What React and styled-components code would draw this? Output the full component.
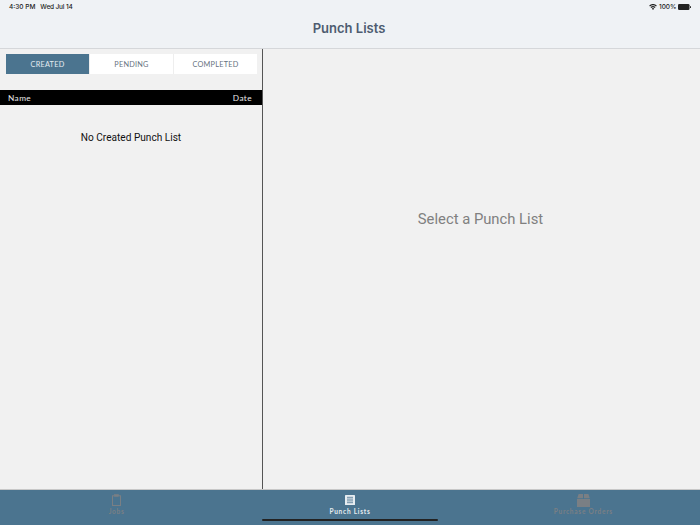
import styled, { createGlobalStyle } from "styled-components";

const GlobalStyle = createGlobalStyle`
  html, body, #root {
    margin: 0;
    padding: 0;
    height: 100%;
  }

  body {
    background: #f1f1f1;
    font-family: "Roboto", "Liberation Sans", sans-serif;
    overflow: hidden;
  }

  * {
    box-sizing: border-box;
  }
`;

const Styled = {
  Page: styled.div`
    display: flex;
    flex-direction: column;
    width: 700px;
    height: 525px;
    position: relative;
  `,

  Header: styled.header`
    flex: 0 0 49px;
    display: flex;
    flex-direction: column;
    background: #eff2f5;
    border-bottom: 1px solid #d5d7da;
  `,

  StatusBar: styled.div`
    display: flex;
    align-items: center;
    justify-content: space-between;
    height: 13px;
    padding: 0 9px;
    font-family: "Inter", "Liberation Sans", sans-serif;
    font-size: 6.5px;
    font-weight: 500;
    color: #222;
  `,

  StatusGroup: styled.div`
    display: flex;
    align-items: center;
    gap: ${({ gap }) => gap}px;
  `,

  DateText: styled.span`
    letter-spacing: -0.15px;
  `,

  Title: styled.h1`
    margin: 0;
    padding-top: 7px;
    padding-right: 2px;
    text-align: center;
    font-family: "Inter", "Liberation Sans", sans-serif;
    font-size: 13px;
    font-weight: 600;
    line-height: 16px;
    color: #4d5c70;
  `,

  Main: styled.main`
    flex: 1;
    display: flex;
    min-height: 0;
  `,

  Sidebar: styled.section`
    flex: 0 0 263px;
    display: flex;
    flex-direction: column;
    border-right: 1px solid #555;
  `,

  Tabs: styled.div`
    display: flex;
    margin: 5px 5px 0 6px;
    height: 20px;
  `,

  Tab: styled.div`
    flex: 1;
    display: flex;
    align-items: center;
    justify-content: center;
    font-family: "Lato", "Liberation Sans", sans-serif;
    font-size: 7.3px;
    letter-spacing: 0.25px;
    color: ${({ active }) => (active ? "#e4ebf0" : "#667280")};
    background: ${({ active }) => (active ? "#4b748f" : "#fff")};
    border-left: ${({ first }) => (first ? "none" : "1px solid #eee")};
  `,

  TableHead: styled.div`
    display: flex;
    align-items: center;
    justify-content: space-between;
    height: 15px;
    margin-top: 16px;
    padding: 0 10px 0 8px;
    background: #000;
    color: #e8e8e8;
    font-family: "Lato", "Liberation Sans", sans-serif;
    font-size: 8.3px;
    letter-spacing: 0.4px;
  `,

  Empty: styled.p`
    margin: 26px 0 0;
    text-align: center;
    font-size: 10.1px;
    line-height: 13px;
    color: #111;
  `,

  Detail: styled.section`
    flex: 1;
    display: flex;
    justify-content: center;
    padding-top: 161px;
    padding-right: 2px;
    font-size: 14.8px;
    line-height: 18px;
    color: #808080;
  `,

  TabBar: styled.nav`
    flex: 0 0 36px;
    display: grid;
    grid-template-columns: repeat(3, 1fr);
    background: #4b748f;
    border-top: 1px solid #c8c8c8;
  `,

  BarItem: styled.div`
    display: flex;
    flex-direction: column;
    align-items: center;
    justify-content: space-between;
    height: 26px;
    padding-top: ${({ active }) => (active ? 5 : 4)}px;
    color: ${({ active }) => (active ? "#e6ecf0" : "#7a7f84")};
  `,

  BarLabel: styled.span`
    font-family: "Lato", "Liberation Sans", sans-serif;
    font-size: 6.5px;
    font-weight: 700;
    letter-spacing: 0.75px;
    line-height: 9px;
  `,

  HomeIndicator: styled.div`
    position: absolute;
    left: 262px;
    bottom: 4px;
    width: 176px;
    height: 2.5px;
    border-radius: 2px;
    background: #222;
  `,
};

function WifiIcon() {
  return (
    <svg width="8" height="6" viewBox="0 0 16 12" fill="#222">
      <path d="M8 12 5.6 9.2a3.6 3.6 0 0 1 4.8 0z" />
      <path d="M4.4 7.9 3 6.2a7.6 7.6 0 0 1 10 0l-1.4 1.7a5.4 5.4 0 0 0-7.2 0z" />
      <path d="M1.9 5 .4 3.2a11.6 11.6 0 0 1 15.2 0L14.1 5a9.4 9.4 0 0 0-12.2 0z" />
    </svg>
  );
}

function BatteryIcon() {
  return (
    <svg width="13" height="6" viewBox="0 0 26 12">
      <rect x="0" y="0" width="23" height="12" rx="2.5" fill="#222" />
      <rect x="24" y="4" width="2" height="4" rx="1" fill="#222" />
    </svg>
  );
}

function JobsIcon() {
  return (
    <svg width="9" height="12" viewBox="0 0 9 12" fill="none" stroke="currentColor">
      <rect x="0.5" y="1.8" width="8" height="9.7" strokeWidth="1" />
      <rect x="2.6" y="0.4" width="3.8" height="2" fill="currentColor" strokeWidth="0.5" />
    </svg>
  );
}

function ListIcon() {
  return (
    <svg width="10" height="10" viewBox="0 0 10 10">
      <rect width="10" height="10" rx="0.6" fill="currentColor" />
      <path d="M2 2.3h6M2 4.1h6M2 5.9h6M2 7.7h6" stroke="#4b748f" strokeWidth="0.8" />
    </svg>
  );
}

function BoxIcon() {
  return (
    <svg width="13" height="13" viewBox="0 0 13 13" fill="currentColor">
      <path d="M0 5h13v8H0z" />
      <path d="M.2 4.3 1.6 0H6v4.3zM7 4.3V0h4.4l1.4 4.3z" />
    </svg>
  );
}

function App() {
  return (
    <>
      <GlobalStyle />
      <Styled.Page>
        <Styled.Header>
          <Styled.StatusBar>
            <Styled.StatusGroup gap={5}>
              <span>4:30 PM</span>
              <Styled.DateText>Wed Jul 14</Styled.DateText>
            </Styled.StatusGroup>
            <Styled.StatusGroup gap={1.5}>
              <WifiIcon />
              <span>100%</span>
              <BatteryIcon />
            </Styled.StatusGroup>
          </Styled.StatusBar>
          <Styled.Title>Punch Lists</Styled.Title>
        </Styled.Header>
        <Styled.Main>
          <Styled.Sidebar>
            <Styled.Tabs>
              <Styled.Tab active first>
                CREATED
              </Styled.Tab>
              <Styled.Tab>PENDING</Styled.Tab>
              <Styled.Tab>COMPLETED</Styled.Tab>
            </Styled.Tabs>
            <Styled.TableHead>
              <span>Name</span>
              <span>Date</span>
            </Styled.TableHead>
            <Styled.Empty>No Created Punch List</Styled.Empty>
          </Styled.Sidebar>
          <Styled.Detail>Select a Punch List</Styled.Detail>
        </Styled.Main>
        <Styled.TabBar>
          <Styled.BarItem>
            <JobsIcon />
            <Styled.BarLabel>Jobs</Styled.BarLabel>
          </Styled.BarItem>
          <Styled.BarItem active>
            <ListIcon />
            <Styled.BarLabel>Punch Lists</Styled.BarLabel>
          </Styled.BarItem>
          <Styled.BarItem>
            <BoxIcon />
            <Styled.BarLabel>Purchase Orders</Styled.BarLabel>
          </Styled.BarItem>
        </Styled.TabBar>
        <Styled.HomeIndicator />
      </Styled.Page>
    </>
  );
}

export default App;
